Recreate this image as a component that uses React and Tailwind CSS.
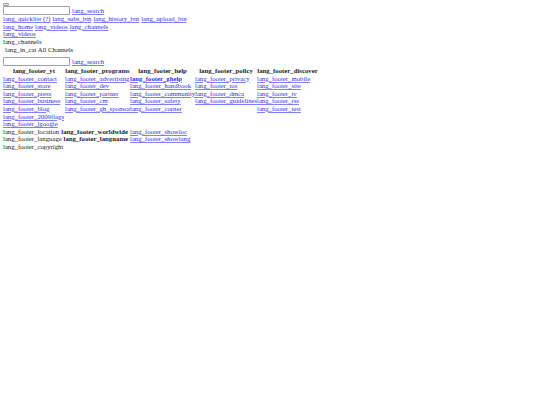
import React from 'react';

const linkClass = 'text-[#3030e8] underline decoration-[#8080f0]';

const L = ({ children, className = '' }) => (
  <a href="#" className={`${linkClass} ${className}`}>{children}</a>
);

const footerRows = [
  ['lang_footer_contact', 'lang_footer_advertising', 'lang_footer_ghelp', 'lang_footer_privacy', 'lang_footer_mobile'],
  ['lang_footer_store', 'lang_footer_dev', 'lang_footer_handbook', 'lang_footer_tos', 'lang_footer_site'],
  ['lang_footer_press', 'lang_footer_partner', 'lang_footer_community', 'lang_footer_dmca', 'lang_footer_tv'],
  ['lang_footer_business', 'lang_footer_cm', 'lang_footer_safety', 'lang_footer_guidelines', 'lang_footer_rss'],
  ['lang_footer_blog', 'lang_footer_gh_sponsor', 'lang_footer_corner', '', 'lang_footer_test'],
  ['lang_footer_2009flags', '', '', '', ''],
  ['lang_footer_jgoogle', '', '', '', ''],
];

const headers = ['lang_footer_yt', 'lang_footer_programs', 'lang_footer_help', 'lang_footer_policy', 'lang_footer_discover'];

const SearchBox = () => (
  <div className="flex items-end gap-[2px] h-[9px]">
    <div className="w-[67px] h-[9px] bg-white border border-[#a0a0a0] rounded-[1px]" />
    <L>lang_search</L>
  </div>
);

export default function App() {
  return (
    <div className="w-[540px] h-[405px] bg-white text-[#222222] pl-[3px] pt-[3px] font-['Liberation_Serif',serif] text-[6.75px] leading-[7.6px] antialiased overflow-hidden">
      <div className="w-[6px] h-[3px] bg-[#e9e9e9] border border-[#a0a0a0] rounded-[1px]" />
      <SearchBox />
      <div className="flex gap-[2px]">
        <L>lang_quicklist (?)</L>
        <L>lang_subs_btn</L>
        <L>lang_history_btn</L>
        <L>lang_upload_btn</L>
      </div>
      <div className="flex gap-[2px]">
        <L>lang_home</L>
        <L>lang_videos</L>
        <L>lang_channels</L>
      </div>
      <div><L>lang_videos</L></div>
      <div>lang_channels</div>
      <div className="pl-[2px] mt-[1px]">lang_in_cat All Channels</div>
      <div className="mt-[3px]"><SearchBox /></div>
      <div className="grid grid-cols-[62px_65px_65px_62px_61px] mt-[1px] whitespace-nowrap">
        {headers.map((h) => (
          <div key={h} className="font-bold text-center">{h}</div>
        ))}
        {footerRows.map((row) =>
          row.map((cell, i) => (
            <div key={`${row[0]}-${i}`}>
              {cell && <L className={cell === 'lang_footer_ghelp' ? 'font-bold' : ''}>{cell}</L>}
            </div>
          ))
        )}
        <div>lang_footer_location</div>
        <div className="font-bold flex justify-end pr-[2px]">lang_footer_worldwide</div>
        <div><L>lang_footer_showloc</L></div>
        <div />
        <div />
        <div>lang_footer_language</div>
        <div className="font-bold flex justify-end pr-[2px]">lang_footer_langname</div>
        <div><L>lang_footer_showlang</L></div>
        <div />
        <div />
        <div className="col-span-5">lang_footer_copyright</div>
      </div>
    </div>
  );
}
